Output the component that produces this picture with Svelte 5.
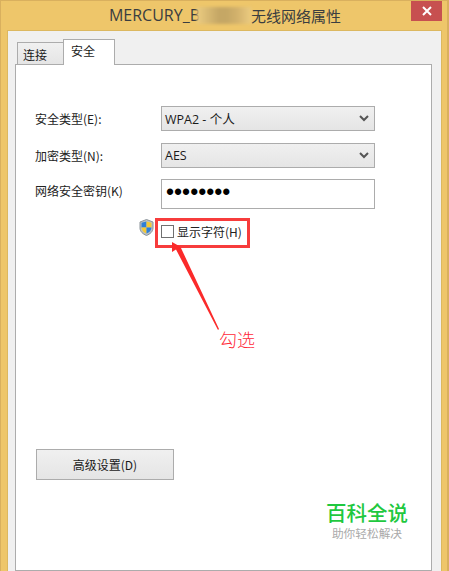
<script lang="ts">
  let showChars = $state(false)

  const rows = [
    { label: '安全类型(E):', value: 'WPA2 - 个人' },
    { label: '加密类型(N):', value: 'AES' }
  ]
</script>

<div class="window">
  <header class="titlebar">
    <div class="title">
      <span class="title-en">MERCURY_B</span>
      <span class="redacted"></span>
      <span class="title-cn">无线网络属性</span>
    </div>
    <button class="close" aria-label="关闭">
      <svg width="10" height="10" viewBox="0 0 10 10">
        <path d="M1 1 9 9M9 1 1 9" stroke="#fff" stroke-width="2" />
      </svg>
    </button>
  </header>

  <div class="client">
    <div class="tabs">
      <div class="tab">连接</div>
      <div class="tab active">安全</div>
    </div>

    <div class="panel">
      <div class="form">
        {#each rows as row}
          <div class="label">{row.label}</div>
          <div class="select">
            <span>{row.value}</span>
            <svg width="10" height="7" viewBox="0 0 10 7">
              <path d="M1 1 5 5 9 1" fill="none" stroke="#555" stroke-width="2" />
            </svg>
          </div>
        {/each}
        <div class="label key-label">网络安全密钥(K)</div>
        <div class="password">••••••••</div>
      </div>

      <div class="show-row">
        <svg class="shield" width="15" height="17" viewBox="0 0 15 17">
          <path d="M7.5 .5 14 3v6c0 3.600-2.800 6-6.500 7.500C3.800 15 1 12.600 1 9V3z" fill="#b9c2c8" stroke="#8a9298" />
          <path d="M7.500 2.500 7.500 8.500H2.500V3.800z" fill="#2f7fd6" />
          <path d="M7.500 2.500 12.500 3.800V8.500H7.500z" fill="#f5c935" />
          <path d="M2.500 8.500H7.500V14.500C4.500 13.500 2.700 11.500 2.500 8.500z" fill="#f5c935" />
          <path d="M7.500 8.500H12.500C12.300 11.500 10.500 13.500 7.500 14.500z" fill="#2f7fd6" />
        </svg>
        <label class="check">
          <input type="checkbox" bind:checked={showChars} />
          <span>显示字符(H)</span>
        </label>
      </div>

      <button class="advanced">高级设置(D)</button>
    </div>
  </div>

  <div class="highlight"></div>
  <svg class="arrow" width="60" height="100" viewBox="0 0 60 100">
    <path d="M1 1 1 11 5 8.500 47 89 48 88 10 7 9 5.500z" fill="#fb2a2a" />
  </svg>
  <div class="note">勾选</div>

  <div class="brand">
    <div class="brand-name">百科全说</div>
    <div class="brand-sub">助你轻松解决</div>
  </div>
</div>

<style>
  :global(body) {
    margin: 0;
    background: #eec66a;
  }

  .window {
    position: relative;
    width: 449px;
    height: 571px;
    overflow: hidden;
    display: flex;
    flex-direction: column;
    background: #eec66a;
    box-shadow: inset 1px 1px 0 #d9b05e, inset -2px 0 0 #d9b05e;
    font-family: "Noto Sans CJK SC", "Open Sans", sans-serif;
    font-size: 12px;
    color: #1a1a1a;
  }

  .titlebar {
    position: relative;
    height: 30px;
    flex: none;
    display: flex;
    justify-content: center;
    align-items: center;
  }

  .title {
    display: flex;
    align-items: center;
    font-size: 15px;
    color: #3a3d40;
    padding-left: 1px;
  }

  .title-en {
    font-family: "Open Sans", "Noto Sans CJK SC", sans-serif;
    font-size: 16px;
  }

  .redacted {
    width: 54px;
    height: 17px;
    margin-left: -3px;
    background: linear-gradient(90deg, #ebcb80, #c5a765 40%, #c5a765 55%, #d3b26c 75%, #ebcb80);
    filter: blur(1.5px);
  }

  .close {
    position: absolute;
    right: 7px;
    top: 1px;
    width: 31px;
    height: 20px;
    padding: 0;
    border: none;
    background: #c75050;
    display: flex;
    align-items: center;
    justify-content: center;
  }

  .client {
    flex: 1;
    margin: 0 7px;
    border: 1px solid #dcb860;
    border-bottom: none;
    background: #f0f0f0;
    padding: 10px 9px 0 7px;
    display: flex;
    flex-direction: column;
    min-height: 0;
  }

  .tabs {
    display: flex;
    align-items: flex-end;
    height: 24px;
    padding-left: 2px;
    flex: none;
    position: relative;
    z-index: 1;
    margin-bottom: -1px;
  }

  .tab {
    box-sizing: border-box;
    width: 47px;
    height: 23px;
    border: 1px solid #acacac;
    background: linear-gradient(#f0f0f0, #e5e5e5);
    padding: 1px 0 0 5px;
    display: flex;
    align-items: center;
  }

  .tab.active {
    width: 52px;
    height: 26px;
    border-bottom: none;
    background: #fff;
    margin-left: -1px;
    padding: 0 0 4px 7px;
  }

  .panel {
    flex: 1;
    border: 1px solid #acacac;
    background: #fff;
    padding: 41px 56px 0 19px;
    display: flex;
    flex-direction: column;
    min-height: 0;
  }

  .form {
    display: grid;
    grid-template-columns: 126px 214px;
    row-gap: 12px;
    align-items: center;
  }

  .label {
    color: #222;
    white-space: nowrap;
  }

  .key-label {
    align-self: start;
    margin-top: 2px;
  }

  .select {
    height: 25px;
    box-sizing: border-box;
    border: 1px solid #acacac;
    background: linear-gradient(#f0f0f0, #e5e5e5);
    display: flex;
    align-items: center;
    justify-content: space-between;
    padding: 0 5px 0 3px;
    font-family: "Open Sans", "Noto Sans CJK SC", sans-serif;
    font-size: 12.500px;
  }

  .password {
    height: 30px;
    margin-top: -1px;
    box-sizing: border-box;
    border: 1px solid #acacac;
    padding: 0 0 4px 4px;
    display: flex;
    align-items: center;
    font-family: "Liberation Sans", sans-serif;
    font-size: 23px;
    color: #000;
  }

  .show-row {
    display: flex;
    align-items: flex-start;
    margin: 10px 0 0 104px;
    height: 20px;
  }

  .shield {
    flex: none;
  }

  .check {
    display: flex;
    align-items: center;
    gap: 3px;
    margin: 4px 0 0 7px;
    color: #222;
  }

  .check input {
    appearance: none;
    width: 13px;
    height: 13px;
    margin: 0;
    border: 1px solid #707070;
    background: #fff;
  }

  .advanced {
    width: 138px;
    height: 31px;
    margin: 210px 0 0 1px;
    border: 1px solid #acacac;
    background: linear-gradient(#f0f0f0, #e5e5e5);
    font: inherit;
    color: #1a1a1a;
    padding: 0;
  }

  .highlight {
    position: absolute;
    left: 155px;
    top: 218px;
    width: 95px;
    height: 30px;
    box-sizing: border-box;
    border: 3px solid #f73c3c;
  }

  .arrow {
    position: absolute;
    left: 171px;
    top: 241px;
  }

  .note {
    position: absolute;
    left: 219px;
    top: 326px;
    font-size: 18px;
    font-weight: 300;
    color: #ff2a3a;
  }

  .brand {
    position: absolute;
    left: 322px;
    top: 503px;
    width: 90px;
    text-align: center;
    font-family: "Liberation Sans", "Noto Sans CJK SC", sans-serif;
  }

  .brand-name {
    font-size: 20.500px;
    line-height: 22px;
    font-weight: 500;
    color: #1fc83f;
    white-space: nowrap;
  }

  .brand-sub {
    margin-top: 2px;
    font-size: 11.700px;
    line-height: 14px;
    color: #aaa;
    white-space: nowrap;
  }
</style>
